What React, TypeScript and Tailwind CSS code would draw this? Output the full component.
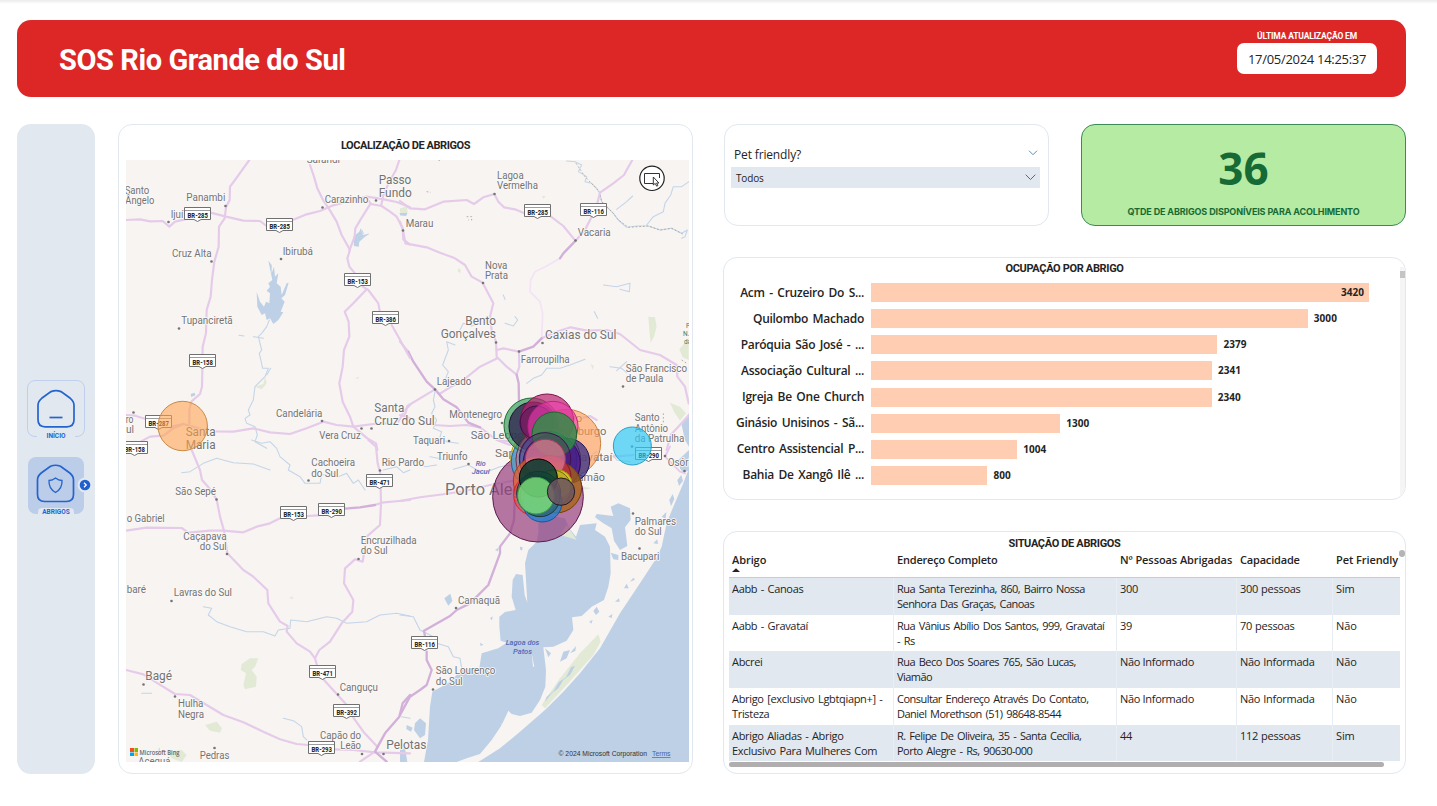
type Label = [text: string, x: number, y: number, width: number, size?: number];

const OPEN = "font-['Open_Sans','Noto_Sans',sans-serif]";
const TITLE = "font-[Roboto,sans-serif] font-bold text-[#252423]";

/* ---------- Map drawing (each layer uses a 3x finer local grid) ---------- */

const roadsNW = [
  "M388,120 L370,145 L345,180 L330,200 L329,240 L318,262 L314,295 L297,320 L296,380 L283,425 L276,480 L272,530 L260,570 L258,640 L248,680 L247,750 L246,800 L240,822 L214,845 L208,870 L208,912",
  "M18,300 L60,298 L90,304 L128,303 L148,320 L165,305 L195,298 M272,278 L318,290 L370,302 L420,303 L440,318 M518,300 L560,283 L600,273 L640,256 L700,240 L740,230 L780,236 L830,246 L870,262",
  "M570,135 L582,170 L592,205 L608,238 L628,268 L650,305 L665,345 L690,390 L682,415 L688,440 L705,460",
  "M752,250 L722,298 L706,325 L704,350 L688,392",
  "M740,232 L752,252 L785,258 L810,275 L830,290 L848,325 L850,358 L870,374",
  "M838,120 L828,150 L808,185 L790,225 L784,255",
  "M740,508 L700,550 L674,575 L686,605 L688,650 L672,690 L668,740 L658,790 L668,845 L690,890 L700,920 L742,955 L768,970 L772,990",
  "M728,500 L745,510 L775,550 L780,578 M815,615 L832,645 L870,714",
  "M18,885 L45,887 L75,896 M155,920 L190,912 L235,925 L290,934 L340,935 L400,925 L450,937 L510,942 L560,925 L610,905 L650,915 L700,920 L760,912 L800,910",
  "M62,965 L90,950 L130,947 L160,925 L190,912",
  "M835,905 L855,870 L870,855",
];
const riversNW = [
  "M715,370 L712,350 L730,340 L725,330 M722,355 L745,342",
  "M448,600 L440,620 L425,640 L415,650 L425,690 L418,700 L428,745 L445,745 L435,770 L405,800 L400,840 L385,870 L390,885 L375,895 L380,910 L405,920 L412,945 L405,965 L440,985",
  "M400,650 L430,655 M357,646 L372,648 M452,745 L440,765",
];
const riversNE = [
  "M500,123 L525,125 L545,135 L535,155 L560,170 L555,185 L575,190 L590,205 L600,222 L605,245 L625,265 L640,280 L655,300 L680,322 L710,318 L745,318 L780,330 L815,325 L845,340 L862,330 L855,350 L845,355",
  "M867,185 L845,200 L820,200 L812,225 L795,250 L790,275 L760,290 L740,315 M698,228 L680,245 L650,268",
  "M610,495 L650,500 L690,490 L688,515 L660,508 M310,525 L315,538 M315,610 L340,618 L353,600 L345,590 M583,575 L593,595",
  "M238,610 L215,618 L190,610 L180,630 M165,675 L140,665 L145,690 L128,735 L145,755 L135,780 L150,790 M555,718 L510,735 L480,745 L440,745 L425,765 L400,775 L380,790",
  "M630,740 L665,745 L680,758 M650,752 L680,725 M105,815 L100,840 L105,860 L95,880 L110,900 L100,925 L125,935 L120,950 L140,965 L175,970",
];
const roadsNE = [
  "M0,243 L30,265 L75,268 L130,245 L200,240 L222,252 L250,232 L283,222 L295,245 L312,262 L345,268 L373,280 M453,290 L490,318 L523,358",
  "M697,120 L680,150 L672,165 L640,190 L600,218 L592,250 M575,290 L555,330 L527,362",
  "M0,305 L9,330 L16,370 L80,382 L120,398 L165,415 L195,435 L215,470 L248,488 L262,515 L280,550 L270,590 L275,630 L288,665 L290,710 L320,740 L350,764",
  "M290,690 L310,685 L357,695 M425,655 L470,635 L512,622 L560,632 L620,630 L660,642 L720,690 L780,705 L830,735 L832,770 L855,800 L866,850",
  "M357,700 L358,740 L350,764 M292,715 L240,740 L190,780 L150,802 L118,822",
  "M0,665 L25,695 M105,808 L60,835 L22,858 L15,885 M0,885 L30,895 M100,915 L150,918 L200,915 L240,922 L290,960 L330,975",
  "M540,895 L570,888 L590,900 M867,885 L835,920 L812,945 L800,990",
];
const majorNE = [
  "M527,362 L490,400 L480,415",
  "M25,695 L40,725 L80,785 L105,808 L130,838 L170,862 L205,908 L240,922",
  "M357,695 L400,680 L425,655 M350,764 L356,790 L357,842",
];
const roadsSW = [
  "M215,30 L240,90 L246,120 L268,145 L290,178 L300,230 L312,272 L322,340 L370,390 L400,410 L442,450 L445,490 L480,545 L503,558 L500,575 L530,610 L570,635 L585,655 L592,680",
  "M18,272 L80,263 L185,264 L205,278 L270,272 L310,272 L370,277 L410,260 L450,250 L480,235 M562,228 L595,226 M765,195 L785,188 L870,180",
  "M745,0 L768,20 L773,70 L782,105 M782,145 L783,190 L780,255 L740,290 L728,365 L705,358 L675,385 L672,430 L700,480 L697,515 L665,550 L630,605 L598,630 L585,655",
  "M610,718 L653,765 L680,795 M700,833 L730,875 L770,918",
  "M18,690 L70,703 L100,722 L165,762 L210,765 L260,795 L310,825 L370,847 L430,875 L480,898 L530,912 L565,915 M645,928 L700,930 L765,937 L870,940 M720,965 L765,935",
];
const majorSW = ["M675,206 L720,202 L765,195", "M870,765 L848,790 L838,830 L795,880 L765,935 L800,965"];
const riversSW = [
  "M395,0 L425,10 L450,5 L470,25 L480,50 L510,75 L505,90 L540,110 L555,130 L600,130 L605,105 L640,100 L655,110 L680,100 L700,130 L715,120 L735,150 M790,90 L830,80 L850,98 L870,90",
  "M185,98 L210,95 L250,70 L290,55 L340,68 L400,72 L450,90 M240,0 L230,20",
  "M250,500 L275,505 L265,525 L290,545 L330,560 L380,575 L430,575 L465,588 L475,570 L510,565 L512,540 L560,545 L620,530 L650,535 L680,550 L740,545 L780,525 L830,520 L870,528",
  "M490,835 L520,842 L545,860 L550,890 L560,900 M845,830 L870,835 M115,945 L118,925 M65,760 L95,760",
];
const roadsSE = [
  "M0,183 L60,172 L130,163 L200,152 L270,135 L340,122",
  "M320,0 L350,20 M810,20 L795,50 L840,95 L855,100 M640,50 L700,45 M300,0 L330,5",
];
const majorSE = [
  "M0,825 L30,770 L60,750 L80,735 L95,690 L80,660 L80,635",
  "M75,590 L72,572 L150,528 L170,510 L210,490 L265,435 L300,340 L300,320 L330,280 L342,240 L345,160",
];
const riversSE = [
  "M0,70 L50,65 L75,80 L110,75 M160,88 L205,75 L250,100 L300,80 L335,75 M90,50 L140,60",
  "M0,525 L40,530 L60,570 L100,590 L110,610 L145,620 L160,650 L180,655 L185,685",
  "M665,50 L640,45 L650,60 L690,65 M590,35 L560,55",
];

const labelsNW: Label[] = [
  ["Sarandi", 560, 130, 100], ["Santo", 14, 221, 74], ["Ângelo", 16, 252, 87], ["Panambi", 199, 244, 117],
  ["Ijuí", 152, 293, 38], ["Carazinho", 614, 248, 131], ["Passo", 776, 192, 98, 37], ["Fundo", 776, 231, 99, 37],
  ["Cruz Alta", 156, 411, 119], ["Ibirubá", 488, 406, 91], ["Tupanciretã", 184, 612, 154], ["Marau", 857, 321, 83],
  ["ro", 17, 909, 23], ["ul", 18, 940, 24], ["Santa", 197, 948, 90, 36], ["Maria", 197, 987, 90, 36],
  ["Candelária", 468, 890, 139], ["Vera Cruz", 598, 957, 124], ["Santa", 763, 875, 90, 36], ["Cruz do Sul", 763, 914, 181, 36],
];
const labelsNE: Label[] = [
  ["Lagoa", 291, 177, 80], ["Vermelha", 291, 208, 123], ["Vacaria", 533, 347, 99], ["Nova", 255, 446, 67], ["Prata", 255, 477, 69],
  ["Bento", 196, 615, 92, 36], ["Gonçalves", 122, 653, 166, 36], ["Caxias do Sul", 435, 657, 214, 36], ["Farroupilha", 362, 728, 147],
  ["São Francisco", 677, 756, 184], ["de Paula", 677, 787, 113], ["Lajeado", 110, 796, 104], ["Montenegro", 148, 895, 158],
  ["São Leopoldo", 212, 958, 205, 35], ["Novo", 465, 906, 82, 35], ["Hamburgo", 462, 944, 157, 35], ["Santo", 704, 904, 75], ["Antônio", 704, 936, 100],
  ["da Patrulha", 704, 967, 149], ["Taquari", 39, 972, 96],
];
const labelsSW: Label[] = [
  ["Cachoeira", 574, 79, 131], ["do Sul", 574, 110, 81], ["Rio Pardo", 785, 79, 127], ["São Sepé", 166, 164, 122], ["o Gabriel", 20, 245, 114],
  ["Caçapava", 190, 300, 130], ["do Sul", 239, 330, 81], ["Encruzilhada", 722, 312, 168], ["do Sul", 722, 343, 81], ["baré", 20, 460, 58],
  ["Lavras do Sul", 161, 469, 175], ["Bagé", 76, 721, 80, 36], ["Hulha", 174, 802, 76], ["Negra", 174, 833, 78], ["Canguçu", 659, 752, 115],
  ["Capão do", 600, 896, 123], ["Leão", 661, 928, 62], ["Pelotas", 799, 928, 120, 36], ["Pedras", 239, 956, 89], ["Aceguá", 55, 974, 96],
];
const labelsSE: Label[] = [
  ["Triunfo", 111, 60, 92], ["Sapucaia", 285, 52, 145, 35], ["Gravataí", 508, 62, 129, 35], ["Viamão", 505, 124, 110, 35],
  ["Porto Alegre", 135, 164, 272, 48], ["Osório", 803, 78, 87], ["Palmares", 704, 254, 124], ["do Sul", 704, 285, 81], ["Bacupari", 663, 359, 115],
  ["Camaquã", 174, 492, 126], ["São Lourenço", 107, 703, 179], ["do Sul", 107, 734, 81],
];

/* [label, left, top] of the highway shields, in map pixels */
const shields: [string, number, number][] = [
  ["BR-285", 184, 207], ["BR-285", 266, 218], ["BR-153", 344, 273], ["BR-386", 372, 311], ["BR-158", 189, 354], ["BR-287", 145, 415],
  ["BR-158", 121, 441], ["BR-285", 524, 204], ["BR-116", 580, 203], ["BR-471", 366, 474], ["BR-153", 280, 506], ["BR-290", 318, 503],
  ["BR-471", 309, 665], ["BR-392", 333, 704], ["BR-293", 308, 741], ["BR-116", 411, 636], ["BR-290", 635, 447],
];

const townDots: [number, number][] = [
  [225.5, 206], [168.5, 222], [322.5, 207.5], [376, 200.5], [211.5, 261.5], [281, 259], [403, 230.5], [494.5, 194], [575.5, 240.5],
  [179, 328.5], [133.5, 412.5], [322, 421], [361.5, 428.5], [371.5, 428.5], [483, 283], [496, 342.5], [519, 351.5], [542.5, 343],
  [623, 386.5], [435, 389.5], [502, 423], [449, 441], [216.5, 499.5], [308.5, 480.5], [380, 470.5], [358.5, 559], [227, 554],
  [171.5, 601], [143.5, 684.5], [175, 696.5], [338, 694.5], [362, 754], [383.5, 754], [214.5, 748], [456, 608], [433, 689.5],
  [633, 513.5], [639.5, 548.5], [632, 446.5], [468.5, 464], [684.5, 471], [665, 456],
];

type Bubble = [cx: number, cy: number, r: number, fill: string, alpha: number, stroke: string];
const bubbles: Bubble[] = [
  [204, 350, 136, "#93397b", 0.68, "#5a1c4c"],
  [290, 190, 102, "#ff9d55", 0.62, "#c9803f"],
  [208, 235, 86, "#ffd21e", 0.7, "#b59a20"],
  [210, 245, 86, "#3592e8", 0.75, "#1763a8"],
  [185, 137, 83, "#3c9c5c", 0.7, "#1f6b38"],
  [190, 139, 73, "#2b1d4c", 0.75, "#17102c"],
  [235, 240, 97, "#e57f84", 0.35, "#703050"],
  [231, 122, 80, "#bb2270", 0.7, "#7d1248"],
  [200, 128, 50, "#3a1050", 0.4, "#3a1050"],
  [249, 139, 75, "#f03eb0", 0.6, "#c02288"],
  [235, 240, 86, "#3a78d0", 0.45, "#254c90"],
  [291, 243, 68, "#2a2582", 0.72, "#1a1760"],
  [245, 250, 86, "#4a1288", 0.65, "#2e0b58"],
  [253, 163, 67, "#2f8f45", 0.82, "#1c6430"],
  [225, 235, 77, "#5a1c60", 0.36, "#401048"],
  [202, 303, 72, "#e8602c", 0.7, "#a83c14"],
  [258, 322, 77, "#a8640e", 0.75, "#704008"],
  [240, 290, 63, "#c4283c", 0.7, "#801828"],
  [226, 238, 60, "#dc7890", 0.75, "#a83c60"],
  [264, 312, 42, "#dde020", 0.85, "#9a9c18"],
  [248, 325, 55, "#b0a020", 0.6, "#706410"],
  [192, 345, 61, "#d05a50", 0.6, "#e81c24"],
  [206, 340, 66, "#205068", 0.5, "#143448"],
  [217, 367, 59, "#2080d4", 0.78, "#105898"],
  [210, 350, 60, "#38605c", 0.6, "#183838"],
  [205, 294, 57, "#083c30", 0.86, "#000000"],
  [198, 347, 55, "#7ee07c", 0.82, "#3c9c44"],
  [273, 335, 41, "#6c5460", 0.86, "#241c24"],
  [487, 198, 57, "#2cc8f6", 0.68, "#28a0c8"],
];

function Lines({ d, color, width }: { d: string[]; color: string; width: number }) {
  return (
    <g fill="none" stroke={color} strokeWidth={width} strokeLinejoin="round" strokeLinecap="round">
      {d.map((p, i) => <path key={i} d={p} />)}
    </g>
  );
}

function Labels({ items }: { items: Label[] }) {
  return (
    <g className="font-[Roboto,sans-serif]" fill="#737373" stroke="#fbf9f8" strokeWidth={5} paintOrder="stroke" strokeLinejoin="round">
      {items.map(([t, x, y, w, s], i) => (
        <text key={i} x={x} y={y} fontSize={s ?? 30} textLength={w} lengthAdjust="spacingAndGlyphs">{t}</text>
      ))}
    </g>
  );
}

function ShelterMap() {
  return (
    <svg width="563" height="602" viewBox="126 160 563 602" className="block">
      <rect x="126" y="160" width="563" height="602" fill="#f7f4f2" />
      {/* water bodies and parks */}
      <g transform="translate(400 440) scale(0.33333)">
        <g fill="#bdd0e5">
          <path d="M867,85 L850,130 L835,165 L820,200 L800,250 L785,320 L772,350 L720,430 L660,520 L600,625 L540,700 L490,755 L435,810 L360,875 L300,925 L235,966 L867,966 Z" />
          <path d="M410,305 L385,330 L375,370 L378,420 L382,488 L374,465 L368,405 L348,402 L338,420 L335,470 L347,510 L315,516 L298,530 L298,560 L302,602 L320,608 L295,625 L245,640 L238,685 L185,690 L160,715 L140,732 L97,755 L90,800 L84,900 L72,966 L170,966 L200,955 L240,942 L275,900 L305,855 L325,812 L335,822 L360,828 L395,818 L420,780 L436,740 L438,690 L430,622 L460,620 L500,602 L520,570 L516,532 L545,528 L575,500 L612,480 L625,440 L632,400 L630,320 L615,290 L585,270 L590,250 L540,255 L528,290 L508,265 L495,235 L440,225 L415,250 L415,280 Z" />
          <path d="M632,200 L655,190 L690,205 L692,240 L675,262 L682,318 L660,330 L642,302 L635,265 L608,248 L585,232 L590,222 L640,228 Z" />
          <path d="M632,338 L655,345 L655,360 L640,358 Z M45,850 L60,835 L78,850 L75,885 L60,895 L42,870 Z M0,930 L15,925 L22,966 L0,966 Z M590,500 l8,15 l-10,10 l-8,-12 Z M435,625 l18,15 l-8,12 Z M480,665 l10,-30 l20,-5 l-10,25 Z M510,640 l18,-22 l-2,15 Z M20,855 l18,8 l-5,12 l-14,-8 Z M360,320 l8,2 l-2,10 l-6,-4 Z" />
          <path d="M832,120 l12,-15 l5,18 l-12,15 Z M808,180 l10,-18 l5,15 l-10,22 Z M785,230 l14,-14 l-2,20 Z M760,310 l12,-12 l2,14 Z M735,350 l12,-10 l2,14 Z M672,445 l8,-14 l6,14 Z M645,485 l12,-10 l2,10 Z M690,425 l10,-12 l5,6 Z M625,530 l12,-8 l-2,12 Z M133,475 l18,-14 l6,22 l-12,14 Z M285,330 l12,-8 l-4,12 Z M240,608 l10,6 l-8,4 Z M568,545 l10,-6 l-4,12 Z M270,535 l8,-6 l-2,12 Z" />
          <path d="M835,60 L867,30 L867,90 L850,100 L840,85 Z" />
        </g>
        <g fill="#e2ead6">
          <path d="M595,583 L602,605 L580,645 L500,735 L435,805 L425,795 L480,715 L540,640 Z" />
          <path d="M500,255 L530,300 L515,295 L480,285 Z M545,150 L575,145 L550,140 Z" />
        </g>
        <path d="M435,785 l20,-25 l20,-15 l15,-25 l20,-15 l15,-28 l-12,5 l-15,30 l-22,15 l-15,25 l-22,20 Z" fill="#bdd0e5" />
        <path d="M305,850 l10,5 l-8,30 Z M320,865 l5,5 l-12,18 Z M395,640 l8,40 l-4,0 Z" fill="#f7f4f2" />
      </g>
      <g transform="translate(120 120) scale(0.33333)">
        <path fill="#bdd0e5" d="M445,422 L455,435 L455,460 L462,440 L465,470 L475,460 L470,490 L482,500 L485,525 L500,490 L506,488 L495,525 L484,535 L494,545 L482,575 L490,577 L475,600 L460,612 L450,595 L440,600 L435,580 L425,585 L412,560 L410,515 L420,545 L432,560 L438,545 L448,550 L450,520 L440,512 L450,500 L445,490 L457,480 Z M212,822 l12,-4 l2,8 l-12,5 Z M702,378 L700,350 L718,335 L722,325 L728,345 L745,342 L730,355 L718,365 L716,380 Z M838,280 L862,275 L860,285 L842,286 Z" />
        <path fill="#e2ead6" d="M845,265 L862,258 L862,278 L848,276 Z M405,800 L430,792 L435,770 L440,790 L425,808 Z M706,774 l12,-4 l-4,8 Z" />
        <Lines d={riversNW} color="#c3d5e8" width={3.2} />
      </g>
      <g transform="translate(400 120) scale(0.33333)">
        <path fill="#e2ead6" d="M745,590 L765,592 L770,620 L762,650 L752,668 L748,630 Z M175,445 l8,5 l-3,10 l-7,-6 Z M425,228 l12,0 l-6,8 Z M572,732 l10,5 l-4,12 Z M838,688 L866,655 L866,720 L848,712 Z M810,848 L840,860 L858,880 L840,902 L822,875 Z M0,265 L18,262 L20,280 L0,278 Z" />
        <path fill="#bdd0e5" d="M867,880 L845,915 L855,960 L867,980 Z M0,280 L22,280 L18,288 L0,286 Z" />
        <Lines d={riversNE} color="#c3d5e8" width={3.2} />
        <g fill="none" stroke="#a8a29a" strokeWidth="2.6" strokeDasharray="5 6">
          <path d="M200,290 h15 v10 h-10 M80,215 l12,2 M115,120 l8,4 M790,880 v30 l-10,15 M845,720 l15,10 M528,130 L555,170 L598,215 L605,245 L640,280 L655,300 L685,322 L745,318 L780,330 L815,325 L850,343" />
        </g>
      </g>
      <g transform="translate(120 440) scale(0.33333)">
        <path fill="#e2ead6" d="M390,655 L415,655 L405,680 L395,690 L410,710 L408,740 L375,748 L370,735 L378,700 L362,690 L365,672 Z M255,855 L290,845 L306,865 L300,878 L270,872 Z M140,935 L185,930 L200,945 L185,966 L155,955 Z M508,475 l8,-6 l5,8 Z" />
        <Lines d={riversSW} color="#c3d5e8" width={3.2} />
      </g>
      <g transform="translate(400 440) scale(0.33333)">
        <Lines d={riversSE} color="#c3d5e8" width={3.2} />
        <Lines d={roadsSE} color="#e5cbe9" width={6} />
        <Lines d={majorSE} color="#d2b0d9" width={7} />
      </g>
      <g transform="translate(120 440) scale(0.33333)">
        <Lines d={roadsSW} color="#e5cbe9" width={6.5} />
        <Lines d={majorSW} color="#d2b0d9" width={7} />
      </g>
      <g transform="translate(400 120) scale(0.33333)">
        <Lines d={["M480,415 L440,438 L405,455 L392,480 L390,515 L420,545 L428,580 L425,655"]} color="#f3e3f5" width={5} />
        <Lines d={roadsNE} color="#e5cbe9" width={6.5} />
        <Lines d={majorNE} color="#d2b0d9" width={7} />
      </g>
      <g transform="translate(120 120) scale(0.33333)">
        <Lines d={roadsNW} color="#e5cbe9" width={6.5} />
      </g>

      {townDots.map(([x, y], i) => <circle key={i} cx={x} cy={y} r="1.3" fill="#757575" />)}

      <g transform="translate(120 120) scale(0.33333)"><Labels items={labelsNW} /></g>
      <g transform="translate(400 120) scale(0.33333)"><Labels items={labelsNE} /></g>
      <g transform="translate(120 440) scale(0.33333)"><Labels items={labelsSW} /></g>
      <g transform="translate(400 440) scale(0.33333)">
        <Labels items={labelsSE} />
        <g className="font-[Roboto,sans-serif] italic" fill="#5068b8" fontWeight="500" fontSize="22">
          <text x="227" y="77" textLength="30" lengthAdjust="spacingAndGlyphs">Rio</text>
          <text x="215" y="102" textLength="54" lengthAdjust="spacingAndGlyphs">Jacuí</text>
          <text x="317" y="616" textLength="101" lengthAdjust="spacingAndGlyphs">Lagoa dos</text>
          <text x="339" y="642" textLength="57" lengthAdjust="spacingAndGlyphs">Patos</text>
        </g>
      </g>
      <g className="font-[Roboto,sans-serif]" fill="#4c7a58" fontSize="6.5">
        <text x="686" y="328">P</text>
        <text x="683" y="336">N.</text>
        <text x="684" y="343.500">da</text>
      </g>

      {shields.map(([t, x, y], i) => (
        <g key={i}>
          <path d={`M${x + 0.5},${y + 0.5} H${x + 26.5} V${y + 12.5} H${x + 17} L${x + 13.5},${y + 14.5} L${x + 10},${y + 12.5} H${x + 0.5} Z`} fill="#fff" stroke="#707070" />
          <path d={`M${x + 1},${y + 3.5} H${x + 26}`} stroke="#9c9c9c" />
          <text className="font-[Roboto,sans-serif]" x={x + 3.5} y={y + 11} fontSize="6.800" fontWeight="800" fill="#2a2a2a" textLength="20.500" lengthAdjust="spacingAndGlyphs">{t}</text>
        </g>
      ))}

      {/* shelter bubbles */}
      <circle cx="182.700" cy="426" r="24.700" fill="#ffa44e" fillOpacity="0.58" stroke="#c88a44" />
      <g transform="translate(470 380) scale(0.33333)">
        {bubbles.map(([cx, cy, r, fill, a, s], i) => (
          <circle key={i} cx={cx} cy={cy} r={r} fill={fill} fillOpacity={a} stroke={s} strokeWidth="3" />
        ))}
      </g>

      {/* selection tool */}
      <circle cx="652" cy="178.300" r="12.200" fill="#fff" stroke="#222" strokeWidth="1.200" />
      <path d="M653,183.500 H644.500 V173.500 H659.500 V178" fill="none" stroke="#333" />
      <path d="M653.300,177 V185 L655.200,183.400 L656.700,186.200 L657.900,185.500 L656.600,183 H658.900 Z" fill="#fff" stroke="#222" strokeWidth="0.900" />

      {/* attribution */}
      <path d="M130,748 h4 v4 h-4 z" fill="#f25022" />
      <path d="M134.500,748 h3.500 v4 h-3.500 z" fill="#7fba00" />
      <path d="M130,752.500 h4 v3.500 h-4 z" fill="#00a4ef" />
      <path d="M134.500,752.500 h3.500 v3.500 h-3.500 z" fill="#ffb900" />
      <text className="font-['Open_Sans',sans-serif]" x="139.500" y="754.500" fontSize="6.500" fontWeight="600" fill="#666" textLength="40" lengthAdjust="spacingAndGlyphs">Microsoft Bing</text>
      <g className="font-['Liberation_Sans',sans-serif]" fontSize="7">
        <text x="558.500" y="756" fill="#333" textLength="88.500" lengthAdjust="spacingAndGlyphs">© 2024 Microsoft Corporation</text>
        <text x="652" y="756" fill="#4a5fb0" textDecoration="underline" textLength="18.500" lengthAdjust="spacingAndGlyphs">Terms</text>
      </g>
    </svg>
  );
}

/* ---------- Page sections ---------- */

function Header() {
  return (
    <header className="ml-[17px] flex h-[77px] w-[1389px] justify-between rounded-[14px] bg-[#dd2726] pr-[29px] pl-[42px] text-white">
      <h1 className="pt-[20px] font-[Roboto,sans-serif] text-[29px] leading-[40px] font-bold tracking-[-0.42px]">SOS Rio Grande do Sul</h1>
      <div className="flex w-[140px] flex-col items-center pt-[10px]">
        <div className="font-[Roboto,sans-serif] text-[8.5px] leading-[12px] font-bold tracking-[-0.16px]">ÚLTIMA ATUALIZAÇÃO EM</div>
        <div className={`${OPEN} mt-px flex h-[31px] w-full items-center justify-center rounded-[7px] bg-white pt-[2px] text-[13px] tracking-[-0.3px] text-[#252423]`}>17/05/2024 14:25:37</div>
      </div>
    </header>
  );
}

const HOUSE = "M22.500,2.300 Q27.500,0.200 32.500,2.300 L41.800,9 Q45.500,12 45.500,16 V30.500 Q45.500,37.500 38.500,37.500 H16.500 Q9.500,37.500 9.500,30.500 V16 Q9.500,12 13.200,9 Z";

function Sidebar() {
  return (
    <nav className="flex h-[650px] w-[78px] flex-col items-start rounded-[14px] bg-[#e1e8f0] pt-[255.500px] pl-[10px]">
      <div className="relative h-[57px] w-[58px] rounded-[8px] border-[1.5px] border-[#c0d0ec]">
        <svg width="58" height="40" viewBox="0 0 58 40" className="mt-[8px]" fill="none" stroke="#2364cf" strokeWidth="1.700">
          <path d={HOUSE} transform="translate(0.500 0.300)" />
          <path d="M21.500,28.500 H34.500" strokeWidth="1.700" />
        </svg>
        <div className="absolute -bottom-[5px] left-1/2 flex h-[9px] w-[38px] -translate-x-1/2 items-center justify-center rounded bg-[#e1e8f0] font-[Roboto,sans-serif] text-[6.5px] leading-none font-bold text-[#2364cf]">INÍCIO</div>
      </div>
      <div className="relative mt-[20px] ml-[1px] h-[57px] w-[56px] rounded-[8px] bg-[#bccde9]">
        <svg width="56" height="40" viewBox="0 0 56 40" className="translate-y-[7px]" fill="none" stroke="#2364cf" strokeWidth="1.700">
          <path d={HOUSE} />
          <path d="M27.500,14 Q30.500,16.500 34,16.500 Q34.500,24.500 27.500,28.500 Q20.500,24.500 21,16.500 Q24.500,16.500 27.500,14 Z" strokeWidth="1.300" />
        </svg>
        <div className="absolute -bottom-[4px] left-1/2 flex h-[10px] w-[36px] -translate-x-1/2 items-center justify-center rounded bg-[#e1e8f0] font-[Roboto,sans-serif] text-[6.5px] leading-none font-bold text-[#2364cf]">ABRIGOS</div>
        <svg width="16" height="16" viewBox="0 0 16 16" className="absolute top-[20px] -right-[9px]">
          <circle cx="8" cy="8" r="7.500" fill="#e1e8f0" />
          <circle cx="8" cy="8" r="5.300" fill="#1f5fcf" />
          <path d="M7,5.800 L9.200,8 L7,10.200" fill="none" stroke="#fff" strokeWidth="1.300" />
        </svg>
      </div>
    </nav>
  );
}

function Filter() {
  return (
    <section className={`${OPEN} ml-[1px] h-[102px] w-[325px] rounded-[14px] border border-[#e1e8f0] pt-[21px] pr-[8px] pl-[6px] text-[#252423]`}>
      <div className="flex h-[21px] items-start justify-between pr-[2px] pl-[3px] text-[12px] leading-[16px] tracking-[-0.15px]">
        <span className="pt-px">Pet friendly?</span>
        <svg width="10" height="6" viewBox="0 0 10 6" className="mt-[4px]" fill="none" stroke="#5b8db0"><path d="M1,0.700 L5,4.700 L9,0.700" /></svg>
      </div>
      <div className="flex h-[21px] items-center justify-between bg-[#e1e8f0] pr-[4px] pl-[5px] text-[10px] tracking-[-0.15px]">
        <span className="pt-px">Todos</span>
        <svg width="11" height="7" viewBox="0 0 11 7" fill="none" stroke="#666"><path d="M0.700,0.700 L5.500,5.500 L10.300,0.700" /></svg>
      </div>
    </section>
  );
}

function AvailableCard() {
  return (
    <section className="flex h-[102px] w-[325px] flex-col items-center rounded-[14px] border border-[#3c8a55] bg-[#b6eba3] pt-[22px] text-[#166a35]">
      <div className={`${OPEN} text-[44px] leading-[42px] font-bold`}>36</div>
      <div className="mt-[17px] font-[Inter,sans-serif] text-[9px] leading-[12px] font-bold tracking-[-0.13px]">QTDE DE ABRIGOS DISPONÍVEIS PARA ACOLHIMENTO</div>
    </section>
  );
}

const bars: [string, number][] = [
  ["Acm - Cruzeiro Do S...", 3420], ["Quilombo Machado", 3000], ["Paróquia São José - ...", 2379], ["Associação Cultural ...", 2341],
  ["Igreja Be One Church", 2340], ["Ginásio Unisinos - Sã...", 1300], ["Centro Assistencial P...", 1004], ["Bahia De Xangô Ilê ...", 800],
];

function OccupancyChart() {
  return (
    <section className="relative mt-[31px] h-[243px] w-[683px] overflow-hidden rounded-[14px] border border-[#e1e8f0]">
      <h2 className={`${TITLE} pt-[4px] text-center text-[11px] leading-[14px] tracking-[-0.34px]`}>OCUPAÇÃO POR ABRIGO</h2>
      <div className="mt-[3.500px] flex flex-col">
        {bars.map(([name, v]) => (
          <div key={name} className={`${OPEN} flex h-[26.14px] items-center text-[#252423]`}>
            <div className="w-[140px] text-right text-[12px] font-semibold tracking-[-0.28px] [word-spacing:1.7px] whitespace-nowrap">{name}</div>
            <div className="ml-[7px] flex h-[19px] items-center justify-end bg-[#ffceb2] pr-[5px]" style={{ width: (v / 3420) * 498 }}>
              {v === 3420 && <span className="text-[10px] font-bold tracking-[0.05px]">{v}</span>}
            </div>
            {v !== 3420 && <span className="ml-[6px] text-[10px] font-bold tracking-[0.05px]">{v}</span>}
          </div>
        ))}
      </div>
      <div className="absolute top-[9px] right-0 h-[232px] w-[5px] bg-[#f5f5f5]">
        <div className="mt-[4px] h-[7px] w-[5px] bg-[#c4c4c4]" />
      </div>
    </section>
  );
}

const rows: [string[], string[], string, string, string][] = [
  [["Aabb - Canoas"], ["Rua Santa Terezinha, 860, Bairro Nossa", "Senhora Das Graças, Canoas"], "300", "300 pessoas", "Sim"],
  [["Aabb - Gravataí"], ["Rua Vânius Abílio Dos Santos, 999, Gravataí", "- Rs"], "39", "70 pessoas", "Não"],
  [["Abcrei"], ["Rua Beco Dos Soares 765, São Lucas,", "Viamão"], "Não Informado", "Não Informada", "Não"],
  [["Abrigo [exclusivo Lgbtqiapn+] -", "Tristeza"], ["Consultar Endereço Através Do Contato,", "Daniel Morethson (51) 98648-8544"], "Não Informado", "Não Informada", "Não"],
  [["Abrigo Aliadas - Abrigo", "Exclusivo Para Mulheres Com"], ["R. Felipe De Oliveira, 35 - Santa Cecília,", "Porto Alegre - Rs, 90630-000"], "44", "112 pessoas", "Sim"],
];

function SheltersTable() {
  const cols = "grid grid-cols-[165px_223px_120px_96px_67px] w-[671px]";
  const cell = "border-r border-[#e9eef4] pl-[3px] pt-[3px] whitespace-nowrap";
  return (
    <section className={`${OPEN} relative mt-[31px] h-[243px] w-[683px] overflow-hidden rounded-[14px] border border-[#e1e8f0] pl-[5px] text-[#252423]`}>
      <h2 className={`${TITLE} pt-[5px] pr-[5px] text-center text-[11px] leading-[14px] tracking-[-0.34px]`}>SITUAÇÃO DE ABRIGOS</h2>
      <div className={`${cols} h-[27px] border-b border-[#c8ccd2] pt-px text-[11px] leading-[15px] font-semibold tracking-[-0.08px] whitespace-nowrap`}>
        <div className="pl-[3px]">
          Abrigo
          <svg width="8" height="4" viewBox="0 0 8 4" className="mt-[1px] block"><path d="M0,4 L4,0.300 L8,4 Z" fill="#252423" /></svg>
        </div>
        <div className="pl-[3px] tracking-[-0.2px]">Endereço Completo</div>
        <div className="pl-[3px]">Nº Pessoas Abrigadas</div>
        <div className="pl-[3px] tracking-[-0.18px]">Capacidade</div>
        <div className="pl-[3px]">Pet Friendly</div>
      </div>
      {rows.map(([name, addr, n, cap, pet], i) => (
        <div key={i} className={`${cols} h-[36.7px] text-[11px] leading-[15px] ${i % 2 === 0 ? "bg-[#e1e8f0]" : "bg-white"}`}>
          <div className={`${cell} tracking-[-0.32px] [word-spacing:1px]`}>{name.map((t) => <div key={t}>{t}</div>)}</div>
          <div className={`${cell} tracking-[-0.53px] [word-spacing:1.4px]`}>{addr.map((t) => <div key={t}>{t}</div>)}</div>
          <div className={`${cell} tracking-[-0.32px]`}>{n}</div>
          <div className={`${cell} tracking-[-0.28px] [word-spacing:0.5px]`}>{cap}</div>
          <div className="pt-[3px] pl-[3px] tracking-[-0.1px]">{pet}</div>
        </div>
      ))}
      <div className="mt-px h-[5px] w-[655px] rounded-full bg-[#b0aeae]" />
      <div className="absolute top-[18px] right-0 h-[7px] w-[6px] rounded-full bg-[#b5b5b5]" />
    </section>
  );
}

export default function App() {
  return (
    <div className="h-[806px] w-[1437px] overflow-hidden bg-white">
      <div className="h-[20px] bg-linear-to-b from-[#ececec] to-white to-20%" />
      <Header />
      <main className="mt-[27px] ml-[17px] flex">
        <Sidebar />
        <section className="ml-[23px] flex h-[650px] w-[575px] flex-col rounded-[14px] border border-[#e1e8f0] pl-[7px]">
          <h2 className={`${TITLE} h-[35px] pt-[14px] pr-[7px] text-center text-[11px] leading-[14px] tracking-[-0.42px]`}>LOCALIZAÇÃO DE ABRIGOS</h2>
          <ShelterMap />
        </section>
        <div className="ml-[30px] w-[683px]">
          <div className="flex justify-between">
            <Filter />
            <AvailableCard />
          </div>
          <OccupancyChart />
          <SheltersTable />
        </div>
      </main>
    </div>
  );
}
